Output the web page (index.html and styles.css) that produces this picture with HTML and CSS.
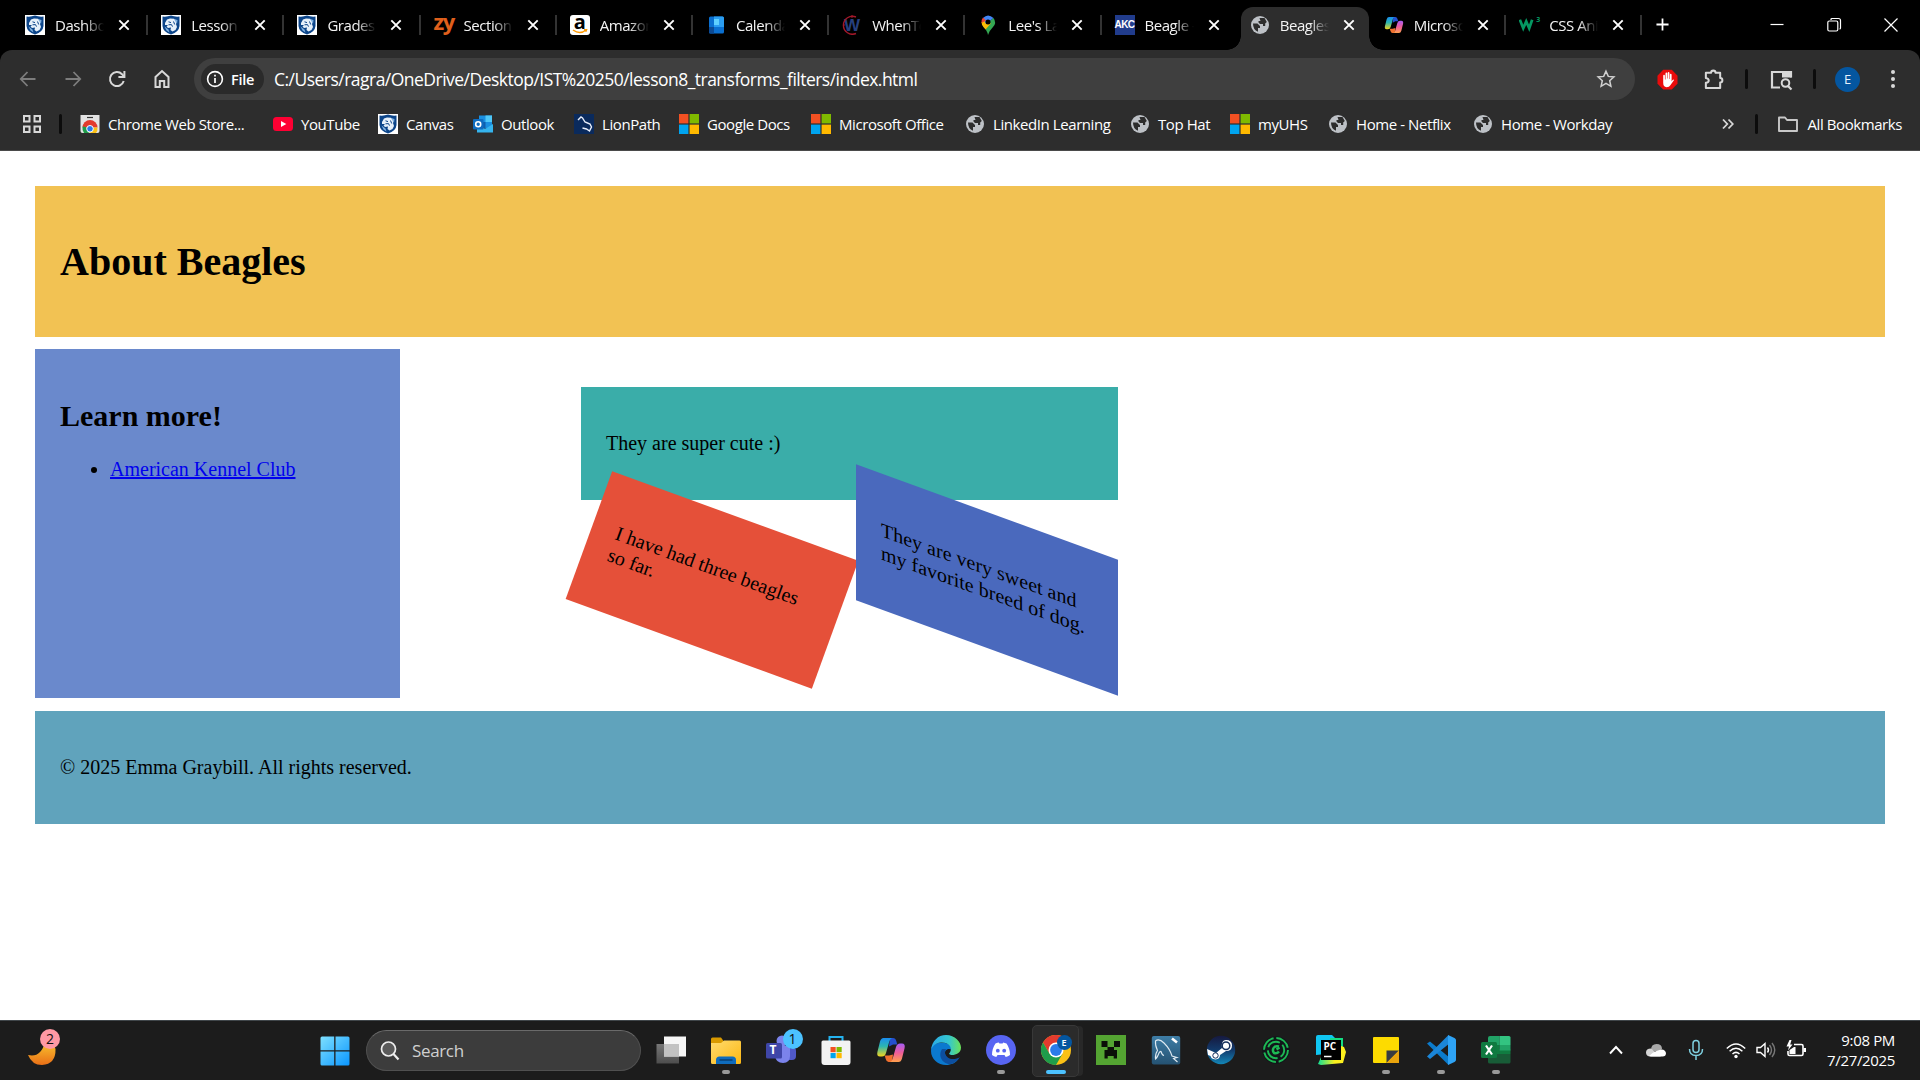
FILE: index.html
```html
<!DOCTYPE html>
<html lang="en">
<head>
<meta charset="utf-8">
<title>About Beagles</title>
<link rel="stylesheet" href="styles.css">
</head>
<body>
<svg class="defs" aria-hidden="true">
  <defs>
    <linearGradient id="blueSky" x1="0" y1="0" x2="1" y2="1"><stop offset="0" stop-color="#7ee0ff"/><stop offset="1" stop-color="#0a96ff"/></linearGradient>
    <linearGradient id="moon" x1="0" y1="0" x2="0" y2="1"><stop offset="0" stop-color="#f9c52f"/><stop offset="1" stop-color="#e96f17"/></linearGradient>
    <linearGradient id="copA" x1="0" y1="0" x2="0" y2="1"><stop offset="0" stop-color="#1a8df0"/><stop offset=".45" stop-color="#2cb6b0"/><stop offset="1" stop-color="#f5d51b"/></linearGradient>
    <linearGradient id="copB" x1="0" y1="0" x2="0" y2="1"><stop offset="0" stop-color="#a55cf5"/><stop offset=".5" stop-color="#ee5d9a"/><stop offset="1" stop-color="#ffa04d"/></linearGradient>
    <linearGradient id="edgeA" x1="0" y1="0" x2="1" y2="0"><stop offset="0" stop-color="#29a8e8"/><stop offset=".6" stop-color="#35c7cf"/><stop offset="1" stop-color="#6be358"/></linearGradient>
    <linearGradient id="steamA" x1="0" y1="0" x2="0" y2="1"><stop offset="0" stop-color="#16193f"/><stop offset=".5" stop-color="#123a6b"/><stop offset="1" stop-color="#1387b8"/></linearGradient>
    <linearGradient id="folderA" x1="0" y1="0" x2="1" y2="1"><stop offset="0" stop-color="#ffdb6e"/><stop offset="1" stop-color="#fcb813"/></linearGradient>
    <linearGradient id="yellowA" x1="0" y1="0" x2="1" y2="0"><stop offset="0" stop-color="#10df95"/><stop offset=".6" stop-color="#fcf01d"/></linearGradient>
    <linearGradient id="greyA" x1="0" y1="0" x2="0" y2="1"><stop offset="0" stop-color="#777"/><stop offset="1" stop-color="#4d4d4d"/></linearGradient>
    <linearGradient id="mysqlA" x1="0" y1="0" x2="0" y2="1"><stop offset="0" stop-color="#3e7da6"/><stop offset="1" stop-color="#255272"/></linearGradient>
  </defs>
  <symbol id="lion" viewBox="0 0 20 20"><path fill="#fff" d="M0 0h20v20H0z"/><path fill="#0b4489" d="M1.500 1.500Q6 2 10 .6 14 2 18.500 1.500V11Q18 17 10 19.600 2 17 1.500 11z"/><path fill="#e6f0fa" d="M4 8l2-3.500L9 3.500l4 .3 2.500 2L15 9l1 3-1.500 3-3 1.500L9.500 15l.5-2.500-3 .5-1.500-1.500L7 10 4 10z"/><path fill="#7fb0e0" d="M3.500 11.500l2 4 3 2-1-3zM13 4l3.500 1-.5 4z"/><path stroke="#0b4489" stroke-width="1" fill="none" d="M7.500 6.800l2.500.8M7.500 9.800l3-.2 1 2M12.500 6.500l1.200 3"/></symbol>
  <symbol id="globe" viewBox="0 0 20 20"><circle cx="10" cy="10" r="9" fill="#bdc1c6"/><path fill="#2d2d2d" d="M3 8.500h4.500L10 11v2H8v3.800Q3 15 3 8.500zM9.500 3h5l2.300 4-1.600 1.500V11H13V9h-3L8.500 7.500V6h2z"/><path fill="#bdc1c6" d="M11 13.500l2-1.500h3l-2 4-3 1z"/></symbol>
  <symbol id="ms" viewBox="0 0 20 20"><path fill="#f25022" d="M0 0h9.400v9.400H0z"/><path fill="#7fba00" d="M10.600 0H20v9.400h-9.400z"/><path fill="#00a4ef" d="M0 10.600h9.400V20H0z"/><path fill="#ffb900" d="M10.600 10.600H20V20h-9.400z"/></symbol>
  <symbol id="copilot" viewBox="0 0 30 30"><path fill="#2450cf" d="M14 3h3q2.500 0 3.300 3l1 3.500H17l-4 2z"/><path fill="#f0702f" d="M16 27h-3.500q-2 0-2.800-3l-1-3.500H13l4-1z"/><path fill="url(#copA)" d="M7.500 3H16q-2 .5-2.700 3.500L10 18q-1 3.500-4 3.500H4q-3.500 0-2.600-4.500L4 6.500Q5 3 7.500 3z"/><path fill="url(#copB)" d="M22.500 27H14q2-.5 2.700-3.500L20 12q1-3.500 4-3.500h2q3.500 0 2.600 4.500L26 23.500q-1 3.500-3.500 3.500z"/></symbol>
  <symbol id="x" viewBox="0 0 12 12"><path d="M1.300 1.300l9.400 9.400M10.700 1.300l-9.400 9.400" stroke="#fff" stroke-width="1.900"/></symbol>
  <symbol id="chrome" viewBox="0 0 30 30"><circle cx="15" cy="15" r="15" fill="#fbc116"/><path fill="#e33b2e" d="M2 7.500A15 15 0 0 1 28 7.500H15L8.500 18.700z"/><path fill="#1f9d4b" d="M2 7.500 8.500 18.750 21.500 18.750 15 30A15 15 0 0 1 2 7.500z"/><circle cx="15" cy="15" r="7.500" fill="#fff"/><circle cx="15" cy="15" r="5.900" fill="#2a7be9"/></symbol>
</svg>

<header class="browser">
  <div class="tabstrip">
    <div class="tab"><svg class="ic"><use href="#lion"/></svg><span class="tab-title">Dashboard</span><svg class="close"><use href="#x"/></svg></div>
    <div class="tab"><svg class="ic"><use href="#lion"/></svg><span class="tab-title">Lesson 8</span><svg class="close"><use href="#x"/></svg></div>
    <div class="tab"><svg class="ic"><use href="#lion"/></svg><span class="tab-title">Grades f</span><svg class="close"><use href="#x"/></svg></div>
    <div class="tab"><span class="zy">zy</span><span class="tab-title">Section</span><svg class="close"><use href="#x"/></svg></div>
    <div class="tab"><span class="amazon">a<svg viewBox="0 0 16 5"><path d="M1 1q7 5 13 0M12 .800l2.500 0-.8 2" fill="none" stroke="#ff9900" stroke-width="1.500"/></svg></span><span class="tab-title">Amazon</span><svg class="close"><use href="#x"/></svg></div>
    <div class="tab"><svg class="ic" viewBox="0 0 20 20"><rect x="3" y="1.500" width="15" height="17" rx="1.500" fill="#0a6fd0"/><path fill="#2b9df0" d="M3 6h5V1.500h8.500q1.500 0 1.500 1.500v9H8V6z"/><path fill="#5fd0ff" d="M8 4h5v6H8z"/><path fill="#0c4a94" d="M3 12h5v6.500H4.500Q3 18.500 3 17z"/></svg><span class="tab-title">Calendar</span><svg class="close"><use href="#x"/></svg></div>
    <div class="tab"><span class="when">W<svg viewBox="0 0 20 20"><path d="M14 2A9 9 0 1 0 14 18.500" fill="none" stroke="#a3182a" stroke-width="1.400"/><path d="M10 0v3M1 10h2" stroke="#a3182a"/></svg></span><span class="tab-title">WhenTo</span><svg class="close"><use href="#x"/></svg></div>
    <div class="tab"><svg class="ic" viewBox="0 0 20 20"><path fill="#34a853" d="M10 20Q9 15 5 11.500L15.500 3Q19 8 15 12 11 16 10 20z"/><path fill="#fbbc04" d="M5.500 12Q3.500 10 3.500 7l5-2 4.300 3.500L7.500 14.600z"/><path fill="#4285f4" d="M5 3Q10-2 15.500 3L8 9z"/><path fill="#ea4335" d="M5 2.600Q3.300 4.500 3.500 8L8 5.500z"/><circle cx="10" cy="7" r="2.500" fill="#000"/></svg><span class="tab-title">Lee's Lan</span><svg class="close"><use href="#x"/></svg></div>
    <div class="tab no-sep"><span class="akc">AKC</span><span class="tab-title">Beagle -</span><svg class="close"><use href="#x"/></svg></div>
    <div class="tab active"><svg class="ic"><use href="#globe"/></svg><span class="tab-title">Beagles</span><svg class="close"><use href="#x"/></svg></div>
    <div class="tab"><svg class="ic"><use href="#copilot"/></svg><span class="tab-title">Microso</span><svg class="close"><use href="#x"/></svg></div>
    <div class="tab"><span class="w3"><svg viewBox="0 0 20 20"><path d="M1 5l4 10 3.500-8 3.500 8 3.500-10" fill="none" stroke="#059862" stroke-width="3.200"/></svg><sup>3</sup></span><span class="tab-title">CSS Ani</span><svg class="close"><use href="#x"/></svg></div>
    <svg class="plus" viewBox="0 0 14 14"><path d="M7 .500v13M.500 7h13" stroke="#fff" stroke-width="1.900"/></svg>
    <div class="window-controls">
      <svg viewBox="0 0 16 16"><path d="M1.500 7.500h13" stroke="#fff" stroke-width="1.200"/></svg>
      <svg viewBox="0 0 16 16"><path d="M5 3V2.500q0-1 1-1h6.500q2 0 2 2V11q0 1-1 1" stroke="#fff" fill="none" stroke-width="1.200"/><rect x="1.800" y="4" width="10" height="10" rx="1.500" fill="none" stroke="#fff" stroke-width="1.200"/></svg>
      <svg viewBox="0 0 16 16"><path d="M1.500 1.500l13 13M14.500 1.500l-13 13" stroke="#fff" stroke-width="1.200"/></svg>
    </div>
  </div>

  <div class="toolbar">
    <div class="nav">
      <svg viewBox="0 0 20 20"><path d="M17.500 10H3M9.500 3L2.800 10l6.700 7" fill="none" stroke="#7d7d7d" stroke-width="1.800"/></svg>
      <svg viewBox="0 0 20 20"><path d="M2.500 10H17M10.500 3l6.700 7-6.700 7" fill="none" stroke="#7d7d7d" stroke-width="1.800"/></svg>
      <svg viewBox="0 0 20 20"><path d="M16.700 12A7 7 0 1 1 15 5.200L17 7.500" fill="none" stroke="#d8d8d8" stroke-width="2"/><path d="M17.400 2v6h-6" fill="none" stroke="#d8d8d8" stroke-width="2"/></svg>
      <svg viewBox="0 0 20 20"><path d="M3.500 18V8L10 2l6.500 6v10h-4.300v-6H7.800v6z" fill="none" stroke="#d8d8d8" stroke-width="2"/></svg>
    </div>
    <div class="omnibox">
      <span class="chip"><svg viewBox="0 0 18 18"><circle cx="9" cy="9" r="7.400" fill="none" stroke="#fff" stroke-width="1.600"/><path d="M9 8v5M9 4.800v1.800" stroke="#fff" stroke-width="1.700"/></svg><span>File</span></span>
      <span class="url">C:/Users/ragra/OneDrive/Desktop/IST%20250/lesson8_transforms_filters/index.html</span>
      <svg class="star" viewBox="0 0 20 20"><path d="M10 2.200l2.300 5.200 5.600.5-4.200 3.800 1.200 5.600-4.900-3-4.900 3 1.200-5.600L2.100 7.900l5.600-.5z" fill="none" stroke="#d0d0d0" stroke-width="1.500"/></svg>
    </div>
    <div class="actions">
      <svg class="act" viewBox="0 0 22 22"><path fill="#e90c0c" d="M6.500.8h9L21.500 7v8.500l-6 6h-9l-6-6V7z"/><path fill="#fff" d="M6.500 7q0-1 .9-1t.9 1v4h.6V4.700q0-1 .9-1t.9 1V10h.5V4.200q0-1 .9-1t.9 1V10.500h.5V6q0-1 .9-1t.9 1v7l1-1.500q1-1 1.600 0L14 17q-1 2-4 2-3.500 0-3.500-4.500z"/></svg>
      <svg class="act puzzle" viewBox="0 0 22 22"><path d="M3 4h5.500a2.300 2.300 0 0 1 4.600 0H18v5.500a2.300 2.300 0 0 1 0 4.600V20H3v-5.500q3-.5 3-2.500T3 9.500z" fill="none" stroke="#d8d8d8" stroke-width="2.100" stroke-linejoin="round"/></svg>
      <i class="bar"></i>
      <svg class="act search-tab" viewBox="0 0 24 22"><path d="M11 19H3V3.500h19V9" fill="none" stroke="#d8d8d8" stroke-width="2.200"/><path fill="#d8d8d8" d="M13 3h9.500v6H13z"/><circle cx="16.500" cy="14.500" r="3.800" fill="none" stroke="#d8d8d8" stroke-width="2"/><path d="M19 17.500l3.500 3.500" stroke="#d8d8d8" stroke-width="2.200"/></svg>
      <i class="bar"></i>
      <span class="avatar">E</span>
      <svg class="dots" viewBox="0 0 6 20"><g fill="#d8d8d8"><circle cx="3" cy="3" r="2"/><circle cx="3" cy="10" r="2"/><circle cx="3" cy="17" r="2"/></g></svg>
    </div>
  </div>

  <div class="bookmarks">
    <svg class="apps" viewBox="0 0 18 18"><g fill="none" stroke="#d8d8d8" stroke-width="2"><path d="M1 1h5.500v5.500H1zM11.500 1H17v5.500h-5.500zM1 11.500h5.500V17H1zM11.500 11.500H17V17h-5.500z"/></g></svg>
    <i class="bar"></i>
    <div class="bm-list">
      <span class="bm w1"><svg viewBox="0 0 20 20"><path fill="#e4e4e4" d="M.5 1h19v16q0 2-2 2h-15q-2 0-2-2z"/><path d="M7 3.500h6" stroke="#333" stroke-width="1.200"/><path fill="#e33b2e" d="M2.500 13.500a7.500 7.500 0 0 1 15 0z"/><path fill="#1f9d4b" d="M2.500 12.500q-.5 4 1.500 6.500H9L6 13z"/><path fill="#fbc116" d="M17.500 13.500q.3 3.500-1.500 5.500H9l4-5.500z"/><circle cx="10" cy="14.800" r="3.300" fill="#2a7be9" stroke="#fff"/></svg>Chrome Web Store...</span>
      <span class="bm w2"><svg viewBox="0 0 20 20"><rect y="3" width="20" height="14" rx="3.500" fill="#ff0033"/><path fill="#fff" d="M8 7l5.300 3L8 13z"/></svg>YouTube</span>
      <span class="bm w3b"><svg><use href="#lion"/></svg>Canvas</span>
      <span class="bm w4"><svg viewBox="0 0 20 20"><rect x="6" y="1.500" width="13" height="13" fill="#1a8fe0"/><path fill="#4fc7f7" d="M12.500 1.500H19V8h-6.500z"/><path fill="#0e5fae" d="M6 8h6.500v6H6z"/><path fill="#35b4ee" d="M4 18.500V11l8 4 8-5v8.500z"/><rect y="5" width="10.500" height="10.500" rx="1" fill="#0f6cc0"/><circle cx="5.200" cy="10.200" r="2.500" fill="none" stroke="#fff" stroke-width="1.600"/></svg>Outlook</span>
      <span class="bm w5"><svg viewBox="0 0 20 20"><path fill="#0a2a5c" d="M0 0h20v20H0z"/><path d="M4 6l3-3 1.500 1L11 8l5 2 1.500 3-2 4-3-2-4-1" fill="none" stroke="#e8eefb" stroke-width="1.400"/></svg>LionPath</span>
      <span class="bm w6"><svg><use href="#ms"/></svg>Google Docs</span>
      <span class="bm w7"><svg><use href="#ms"/></svg>Microsoft Office</span>
      <span class="bm w8"><svg><use href="#globe"/></svg>LinkedIn Learning</span>
      <span class="bm w9"><svg><use href="#globe"/></svg>Top Hat</span>
      <span class="bm w10"><svg><use href="#ms"/></svg>myUHS</span>
      <span class="bm w11"><svg><use href="#globe"/></svg>Home - Netflix</span>
      <span class="bm w12"><svg><use href="#globe"/></svg>Home - Workday</span>
    </div>
    <svg class="more" viewBox="0 0 12 12"><path d="M1 1.500L5.300 6 1 10.500M6.500 1.500L10.800 6l-4.300 4.500" fill="none" stroke="#d8d8d8" stroke-width="1.800"/></svg>
    <i class="bar"></i>
    <span class="bm all"><svg viewBox="0 0 20 20"><path d="M1 17V3.500h6l2 2.500h10v11z" fill="none" stroke="#c8c8c8" stroke-width="1.900" stroke-linejoin="round"/></svg>All Bookmarks</span>
  </div>
</header>

<main class="page">
  <div class="title-band"><h1>About Beagles</h1></div>
  <div class="middle">
    <aside class="side"><h2>Learn more!</h2><ul><li><a href="#">American Kennel Club</a></li></ul></aside>
    <section class="facts">
      <div class="fact cute"><p>They are super cute :)</p></div>
      <div class="fact three"><p>I have had three beagles so far.</p></div>
      <div class="fact sweet"><p>They are very sweet and my favorite breed of dog.</p></div>
    </section>
  </div>
  <footer class="foot"><p>© 2025 Emma Graybill. All rights reserved.</p></footer>
</main>

<nav class="taskbar">
  <div class="weather"><svg viewBox="0 0 28 28"><path fill="url(#moon)" d="M0 18Q13 21 17 5q9 0 10.500 7Q28 27 14 28 4 28 0 18z"/></svg><span class="badge pink">2</span></div>
  <svg class="start" viewBox="0 0 30 30"><path fill="url(#blueSky)" d="M2 .500h12.200v13.700H.500V2q0-1.500 1.500-1.500zM15.500.500H28q1.500 0 1.500 1.500v12.200h-14zM.500 15.500h13.700v14H2q-1.500 0-1.500-1.500zM15.500 15.500h14V28q0 1.500-1.500 1.500H15.500z"/></svg>
  <div class="search"><svg viewBox="0 0 20 20"><circle cx="8.500" cy="8" r="7" fill="#5a5a5a" stroke="#eee" stroke-width="1.700"/><path d="M13.500 13l5 5.500" stroke="#eee" stroke-width="2.200"/></svg><span>Search</span></div>
  <div class="apps-row">
    <div class="app"><svg viewBox="0 0 30 30"><path fill="url(#greyA)" d="M.500 9H23v19.500H.500z"/><path fill="#f6f6f6" d="M8 1.500h22v20H8z"/><path fill="#c2c2c2" d="M8 9h15v12.500H8z"/></svg></div>
    <div class="app run"><svg viewBox="0 0 30 30"><path fill="#d99a00" d="M0 4q0-1.500 1.500-1.500H10L12.500 6H20v6H0z"/><path fill="url(#folderA)" d="M0 8h10l3-2.500h15.500Q30 5.500 30 7v20.500q0 1.500-1.500 1.500h-27Q0 29 0 27.500z"/><path fill="#0f6cbd" d="M5 29v-4q0-3.500 3.500-3.500h13Q25 21.500 25 25v4z"/><path d="M8.500 25h13" stroke="#083f75" stroke-width="1.500"/></svg></div>
    <div class="app"><svg viewBox="0 0 30 30"><circle cx="25" cy="9" r="4" fill="#5059c9"/><rect x="18" y="12" width="12" height="13" rx="4" fill="#5059c9"/><circle cx="16" cy="6" r="5.500" fill="#7b83eb"/><path fill="#7b83eb" d="M9 11h15v10q0 7-7 7t-8-7z"/><rect y="8" width="16" height="15.500" rx="1.500" fill="#3f46a8"/></svg><b class="teams-t">T</b><span class="badge blue">1</span></div>
    <div class="app"><svg viewBox="0 0 30 30"><path d="M8.500 7V2h13v5" fill="none" stroke="#24b3f0" stroke-width="2"/><path fill="#f3f3f3" d="M.500 7q0-1.500 1.500-1.500h26q1.500 0 1.500 1.500v20q0 3-3 3h-23q-3 0-3-3z"/><path fill="#f25022" d="M9.500 12h5.200v5.200H9.500z"/><path fill="#7fba00" d="M15.500 12h5.200v5.200h-5.200z"/><path fill="#00a4ef" d="M9.500 18h5.200v5.200H9.500z"/><path fill="#ffb900" d="M15.500 18h5.200v5.200h-5.200z"/></svg></div>
    <div class="app"><svg><use href="#copilot"/></svg></div>
    <div class="app"><svg viewBox="0 0 30 30"><path fill="#0b79cf" d="M0 16C0 8 8 7 14 8c5 1 7 4 7 7-2-2-8-1-7 4 1 6 9 7 14 4-3 5-8 7-13 7C7 30 0 24 0 16z"/><path fill="#0d4fa0" d="M11 14c-5 8 2 16 9 15 4-1 7-4 9-7-6 4-14 2-15-4q0-2 1-4z"/><path fill="url(#edgeA)" d="M0 15C1 6 7 0 15 0c9 0 15 7 15 12.500S25 20 21 20c-2 0-4-1-2-2.500C22 12 17 7 10 7.500 4 8 1 12 0 15z"/></svg></div>
    <div class="app run"><svg viewBox="0 0 30 30"><circle cx="15" cy="15" r="15" fill="#5865f2"/><path fill="#fff" d="M9.500 8.500q2-1 3.300-1.100l.6 1.200h3.200l.6-1.200q1.500.2 3.300 1.100Q24 13.500 24 20q-2 1.500-4.300 2l-1.200-2h-7l-1.200 2Q8 21.500 6 20q0-6.500 3.500-11.500z"/><circle cx="11.800" cy="15.700" r="1.900" fill="#5865f2"/><circle cx="18.200" cy="15.700" r="1.900" fill="#5865f2"/></svg></div>
    <div class="app current"><svg><use href="#chrome"/></svg><span class="profile">E</span></div>
    <div class="app"><svg viewBox="0 0 30 30"><path fill="#54a432" d="M0 0h30v30H0z"/><path fill="#0b0f08" d="M5.500 6h6v6h-6zM18 6h6v6h-6zM11.500 12H18v3h3v8.500h-3.300V21h-6v2.500H8.500V15h3z"/></svg></div>
    <div class="app"><svg viewBox="0 0 30 30"><rect x=".8" y="1" width="28.400" height="28.500" rx="2" fill="url(#mysqlA)"/><path d="M8 18Q6 23 4.500 24 4 19 6.500 15.500 4 10 4.500 6 8 3 13 8q6 6 8 13l5 1.500-3.500 1 4 3.500M8 18q1-2 2-1.500 1 3.500 3 4" fill="none" stroke="#dfeaf2" stroke-width="1.100"/><path d="M21 3.500l5 4" stroke="#fff" stroke-width="2.600"/></svg></div>
    <div class="app"><svg viewBox="0 0 30 30"><circle cx="15" cy="15" r="14.200" fill="url(#steamA)"/><path fill="#fff" d="M1 14l9 4 6-5q-1-8 4-8 6 0 6 5.500T20 16l-6 4q0 4-4.500 4.500Q5 24 4.500 21L2 20z"/><circle cx="20" cy="10.700" r="3.800" fill="none" stroke="#16305c" stroke-width="1.500"/><circle cx="9.500" cy="20.500" r="2.700" fill="none" stroke="#16305c"/></svg></div>
    <div class="app"><svg viewBox="0 0 30 30"><circle cx="15" cy="15" r="13.800" fill="#11161a"/><g fill="none" stroke="#1db954" stroke-width="1.900"><circle cx="15" cy="15" r="12" stroke-dasharray="16 2.850"/><circle cx="15" cy="15" r="8.200" stroke-dasharray="14 3.170" stroke-dashoffset="6"/><path stroke-width="2.400" d="M18 11.500q-4-1-5.500 1.500t.5 5q3 1 5-1.500M15.500 14.500l3-2"/></g></svg></div>
    <div class="app"><svg viewBox="0 0 30 30"><path fill="#10c6f2" d="M0 2q0-2 2-2h14l4 4v14L0 20z"/><path fill="#14dd84" d="M14 3h13v12H14z"/><path fill="url(#yellowA)" d="M6 20h16V10l6 2 2 5-3 11-22 2-3-1z"/><path fill="#000" d="M5 5h20v20H5z"/><path d="M8 21.500h7.500" stroke="#fff" stroke-width="1.500"/></svg><b class="pc">PC</b></div>
    <div class="app run"><svg viewBox="0 0 30 30"><rect x="2" y="2" width="26" height="26" rx="1" fill="#fddb00"/><path fill="#383b40" d="M15.500 15.500H28L15.500 28z"/><path fill="#e9a40c" d="M28 15.500V28H15.500z"/></svg></div>
    <div class="app run"><svg viewBox="0 0 30 30"><path fill="#0b7bcc" d="M1 8.500l3-2L24 23l-1.500 7z"/><path fill="#1b86d8" d="M1 21.500l3 2.500L24 8l-1.500-8z"/><path fill="#2ea3f5" d="M22 0l6.500 3q1.500 1 1.500 2v20q0 1-1.500 2L22 30z"/></svg></div>
    <div class="app run"><svg viewBox="0 0 30 30"><path fill="#21a366" d="M7 3q0-2 2-2h9.500v9H7z"/><path fill="#33c481" d="M18.500 1H28q1.500 0 1.500 1.500V10h-11z"/><path fill="#107c41" d="M7 10h11.500v9H7zM18.500 14.500h11V19h-11z"/><path fill="#21a366" d="M18.500 10h11v5.500h-11z"/><path fill="#185c37" d="M7 19h22.500v8q0 1.500-1.500 1.500H9Q7 28.500 7 27z"/><rect y="7" width="16" height="16" rx="1.500" fill="#0f7a40"/><path d="M5 10.500l6 9M11 10.500l-6 9" stroke="#fff" stroke-width="2.200"/></svg></div>
  </div>
  <div class="tray">
    <svg class="t1" viewBox="0 0 14 14"><path d="M1 10.500l6-6.500 6 6.500" fill="none" stroke="#fff" stroke-width="1.900"/></svg>
    <svg class="t2" viewBox="0 0 20 20"><path fill="#a9a9a9" d="M5 10q0-6 5.500-6T16 9l-4 3z"/><path fill="#d4d4d4" d="M4.500 16.500Q0 16.500 0 12.500T5 8.500l10 8z"/><path fill="#fff" d="M3 16q4-4 7.500-5 8-4 9.500 2 0 3.500-3.500 3.500H5z"/></svg>
    <svg class="t3" viewBox="0 0 16 22"><rect x="5" y="1.500" width="6" height="12" rx="3" fill="none" stroke="#7ed0e0" stroke-width="1.500"/><path d="M1.500 10q0 6.500 6.500 6.500t6.500-6.500M8 16.500V21" fill="none" stroke="#7ed0e0" stroke-width="1.500"/></svg>
    <svg class="t4" viewBox="0 0 20 20"><g fill="none" stroke="#fff" stroke-width="1.500"><path d="M.800 8.500q9.200-9 18.400 0M3.600 11.200q6.400-6 12.800 0M6.500 14q3.500-3.200 7 0"/></g><circle cx="10" cy="16.500" r="1.700" fill="#fff"/></svg>
    <svg class="t5" viewBox="0 0 20 20"><g fill="none" stroke-width="1.400"><path d="M1 7.500h3.500L9 3.500v13l-4.500-4H1zM11.500 7.500q2 2.500 0 5" stroke="#fff"/><path d="M13.500 5q4 5 0 10M16 3q5.500 7 0 14" stroke="#777"/></g></svg>
    <svg class="t6" viewBox="0 0 20 20"><path d="M8 4.500h7.500Q17 4.500 17 6v8q0 1.500-1.500 1.500h-12Q2 15.500 2 14v-3" fill="none" stroke="#fff" stroke-width="1.600"/><path fill="#fff" d="M17.500 8H20v4h-2.500zM3.500 14V10L8 7h1.500v7zM3.500 0L.500 6.500H3L2 10.500 6.500 4.500H4.200L5.500 0z"/></svg>
    <div class="clock"><span>9:08 PM</span><span>7/27/2025</span></div>
  </div>
</nav>
</body>
</html>
```
FILE: styles.css
```css
* { box-sizing: border-box; }
html, body { height: 100%; }
body {
  margin: 0;
  width: 1920px;
  height: 1080px;
  display: flex;
  flex-direction: column;
  overflow: hidden;
  background: #fff;
  color: #000;
  font: 20px "Liberation Serif", serif;
}
svg { display: block; flex: none; }
.defs { position: absolute; width: 0; height: 0; }

/* browser chrome */
.browser {
  height: 151px;
  flex: none;
  background: #000;
  color: #f4f4f4;
  font: 15px "Open Sans", sans-serif;
}
.tabstrip { height: 50px; display: flex; padding-left: 12px; align-items: stretch; }
.tab {
  width: 136.200px;
  flex: none;
  display: flex;
  align-items: center;
  padding-left: 13px;
  background: linear-gradient(#333, #333) right 15px / 2px 20px no-repeat;
}
.tab.no-sep { background: none; }
.ic { width: 20px; height: 20px; }
.tab-title {
  width: 49px;
  margin: 0 14px 1px 10px;
  overflow: hidden;
  white-space: nowrap;
  letter-spacing: -.45px;
  -webkit-mask-image: linear-gradient(90deg, #000 60%, transparent);
  mask-image: linear-gradient(90deg, #000 60%, transparent);
}
.close { width: 12px; height: 12px; }
.tab.active {
  position: relative;
  width: 128px;
  margin: 7px 2px 0 3px;
  padding: 0 0 7px 9px;
  background: #2d2d2d;
  border-radius: 12px 12px 0 0;
}
.tab.active ~ .tab { width: 135.500px; }
.tab.active::before, .tab.active::after {
  content: "";
  position: absolute;
  bottom: 0;
  width: 14px;
  height: 14px;
}
.tab.active::before { left: -14px; background: radial-gradient(circle at 0 0, transparent 13.500px, #2d2d2d 14px); }
.tab.active::after { right: -14px; background: radial-gradient(circle at 100% 0, transparent 13.500px, #2d2d2d 14px); }
.zy { width: 20px; color: #e0601c; font: bold 22px/20px "Open Sans", sans-serif; letter-spacing: -1.500px; padding-bottom: 9px; }
.amazon {
  width: 20px; height: 20px; border-radius: 3px; background: #fff; color: #000;
  display: flex; flex-direction: column; align-items: center;
  font: bold 20px/14px "Open Sans", sans-serif;
}
.amazon svg { width: 16px; height: 5px; }
.when { position: relative; width: 20px; height: 20px; color: #27407f; text-align: center; font: bold 17px/21px "Liberation Sans", sans-serif; }
.when svg { position: absolute; inset: 0; }
.akc { width: 20px; height: 20px; background: #213c8c; color: #fff; text-align: center; font: bold 10px/20px "Liberation Sans", sans-serif; letter-spacing: -.6px; }
.w3 { width: 20px; height: 20px; display: flex; color: #059862; }
.w3 svg { width: 17px; height: 18px; }
.w3 sup { font: bold 7px/9px "Open Sans", sans-serif; }
.plus { width: 13px; height: 13px; margin: 18px 0 0 14px; }
.window-controls { margin-left: auto; padding-right: 21px; display: flex; gap: 41px; align-items: center; }
.window-controls svg { width: 16px; height: 16px; }

.toolbar {
  height: 58px;
  display: flex;
  align-items: center;
  padding: 0 24px 0 18px;
  background: #2d2d2d;
  border-radius: 12px 12px 0 0;
}
.nav { display: flex; gap: 24.700px; width: 177px; }
.nav svg { width: 20px; height: 20px; }
.omnibox {
  width: 1441px;
  height: 42px;
  flex: none;
  display: flex;
  align-items: center;
  padding: 0 19px 0 7px;
  border-radius: 21px;
  background: #3f3f3f;
}
.chip {
  width: 63px; height: 30px; border-radius: 15px; background: #2a2a2a;
  display: flex; align-items: center; gap: 7px; padding-left: 5px;
  font-weight: 600; font-size: 14.500px; letter-spacing: -.3px; color: #fff;
}
.chip svg { width: 18px; height: 18px; }
.url { margin-left: 10px; font-size: 17.500px; color: #fff; letter-spacing: -.52px; white-space: nowrap; }
.star { width: 20px; height: 20px; margin-left: auto; }
.actions { display: flex; align-items: center; width: 262px; padding-left: 22px; }
.act { width: 21px; height: 21px; }
.puzzle { margin-left: 25px; }
.bar { width: 3px; height: 20px; border-radius: 2px; background: #0c0c0c; flex: none; }
.actions .bar { margin-left: 21px; }
.search-tab { width: 24px; height: 23px; margin-left: 21px; }
.search-tab + .bar { margin-left: 20px; }
.avatar { width: 25px; height: 25px; border-radius: 50%; margin-left: 19px; background: #0456a0; color: #e8f1fb; text-align: center; font-size: 13px; line-height: 25px; }
.dots { width: 6px; height: 20px; margin-left: 30px; }

.bookmarks {
  height: 43px;
  display: flex;
  align-items: center;
  padding: 0 18px 10px 23px;
  background: #2d2d2d;
  border-bottom: 1px solid #4a4a4a;
}
.apps { width: 18px; height: 18px; }
.bookmarks .bar { margin-left: 18px; }
.bm-list { display: flex; margin-left: 18px; width: 1642px; }
.bm { display: flex; align-items: center; gap: 8px; white-space: nowrap; flex: none; color: #fff; letter-spacing: -.42px; }
.bm svg { width: 20px; height: 20px; }
.w1 { width: 193px; } .w2 { width: 105px; } .w3b { width: 95px; } .w4 { width: 101px; }
.w5 { width: 105px; } .w6 { width: 132px; } .w7 { width: 154px; } .w8 { width: 165px; }
.w9 { width: 100px; } .w10 { width: 98px; } .w11 { width: 145px; } .w12 { width: 150px; }
.more { width: 12px; height: 12px; }
.bookmarks .more + .bar { margin-left: 21px; }
.bookmarks .bar + .all { margin-left: 20px; gap: 10px; }

/* web page */
.page { flex: 1; padding: 35px; display: flex; flex-direction: column; gap: 12.500px; }
.title-band { height: 150.500px; padding: 25px; background: #f2c253; }
h1 { margin: 28px 0; font-size: 40px; line-height: 46px; }
.middle { height: 349px; display: flex; gap: 181px; }
.side { width: 365px; padding: 25px; background: #6a89cc; }
h2 { margin: 25px 0; font-size: 30px; line-height: 34px; }
ul { margin: 25px 0; padding-left: 50px; }
li { line-height: 23px; }
a { color: #0000ee; }
.facts {
  width: 537px;
  padding-top: 38px;
  display: grid;
  grid-template-columns: 1fr 1fr;
  grid-template-rows: 112.500px 136px;
  gap: 12.500px;
}
.fact { padding: 25px; }
.fact p, .foot p { margin: 20px 0; line-height: 23px; }
.cute { grid-column: 1 / 3; background: #3aada9; }
.three { background: #e55039; transform: rotate(20deg); }
.sweet { background: #4a69bd; transform: skewY(20deg); }
.foot { height: 113px; padding: 25px; background: #60a3bc; }

/* taskbar */
.taskbar {
  height: 60px;
  flex: none;
  display: flex;
  align-items: center;
  padding: 0 25px 0 28px;
  background: #1c1c1c;
  border-top: 1px solid #40464a;
  color: #fff;
  font: 15px "Open Sans", sans-serif;
}
.weather { position: relative; width: 292px; }
.weather svg { width: 28px; height: 28px; }
.badge { position: absolute; width: 20px; height: 20px; border-radius: 50%; color: #111; text-align: center; font-size: 14px; line-height: 20px; }
.badge.pink { left: 12px; top: -8px; background: #ff99a4; }
.start { width: 30px; height: 30px; }
.search {
  width: 275px; height: 41px; margin-left: 16px; border-radius: 21px;
  background: #3c3c3c; border: 1px solid #505050; border-top-color: #6a6a6a;
  display: flex; align-items: center; padding-left: 13px; gap: 12px;
  color: #d0d0d0; font-size: 17px; letter-spacing: -.35px;
}
.search svg { width: 20px; height: 20px; }
.apps-row { display: flex; margin-left: 2.500px; align-self: stretch; }
.app { position: relative; width: 55px; display: flex; justify-content: center; align-items: center; padding-bottom: 1px; }
.app svg { width: 30px; height: 30px; }
.app.run::after, .app.current::after {
  content: ""; position: absolute; bottom: 6px; width: 8px; height: 4px; border-radius: 2px; background: #999;
}
.app.current::after { width: 20px; background: #4cc2ff; }
.app.current { z-index: 0; }
.app.current::before {
  content: ""; position: absolute; z-index: -1; left: 3px; top: 4px; width: 45px; height: 50px; border-radius: 5px;
  background: #2b2b2b; border: 1px solid #383838; box-shadow: 5px 0 0 -1px #282828;
}
.badge.blue { left: 29px; top: 8px; background: #4cc2ff; }
.profile { position: absolute; left: 28px; top: 14px; width: 15px; height: 15px; border-radius: 50%; background: #0456a0; text-align: center; font-size: 9px; line-height: 15px; font-weight: 600; }
.teams-t { position: absolute; left: 16px; top: 21px; width: 8px; font-size: 12px; line-height: 16px; }
.pc { position: absolute; left: 20px; top: 18px; font-size: 10px; line-height: 14px; }
.tray { display: flex; align-items: center; flex: 1; margin-left: 85px; padding-bottom: 1px; }
.tray svg { width: 20px; height: 20px; }
.tray .t1 { width: 14px; height: 14px; }
.tray .t2 { margin-left: 23px; }
.tray .t3 { width: 16px; height: 24px; margin-left: 22px; }
.tray .t4 { margin-left: 22px; }
.tray .t5 { margin-left: 10px; }
.tray .t6 { margin-left: 10px; }
.clock { margin-left: auto; display: flex; flex-direction: column; align-items: flex-end; line-height: 20px; font-size: 15px; letter-spacing: -.35px; }
```
